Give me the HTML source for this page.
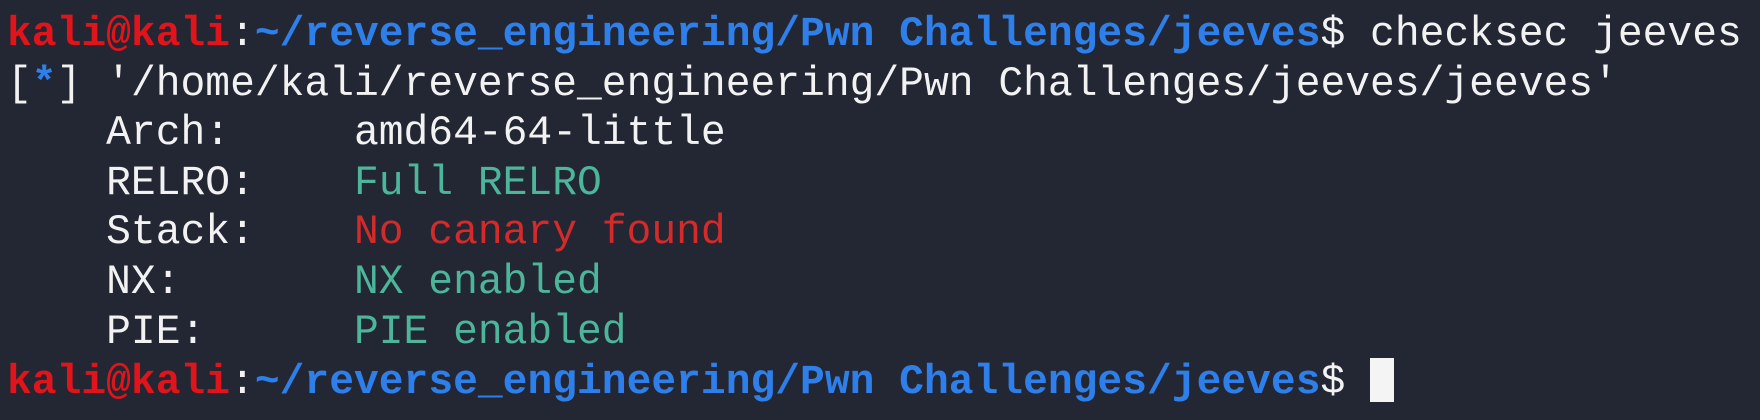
<!DOCTYPE html>
<html><head><style>
html,body{margin:0;padding:0;background:#222733;width:1760px;height:420px;overflow:hidden}
pre{margin:0;padding:11px 0 0 7px;font-family:"Liberation Mono",monospace;font-size:41.3px;line-height:49.6px;color:#f2f2f2;white-space:pre}
.r{color:#e0141a;font-weight:bold}.b{color:#2f7fea;font-weight:bold}
.bl{color:#2f7fea;font-weight:bold}.g{color:#4cb59a}.rd{color:#d52a2a}
.cur{display:inline-block;width:24px;height:44px;background:#f4f4f4;vertical-align:-9px}
</style></head><body><pre><span class="r">kali@kali</span>:<span class="b">~/reverse_engineering/Pwn Challenges/jeeves</span>$ checksec jeeves
[<span class="bl">*</span>] '/home/kali/reverse_engineering/Pwn Challenges/jeeves/jeeves'
    Arch:     amd64-64-little
    RELRO:    <span class="g">Full RELRO</span>
    Stack:    <span class="rd">No canary found</span>
    NX:       <span class="g">NX enabled</span>
    PIE:      <span class="g">PIE enabled</span>
<span class="r">kali@kali</span>:<span class="b">~/reverse_engineering/Pwn Challenges/jeeves</span>$ <span class="cur"></span></pre></body></html>
